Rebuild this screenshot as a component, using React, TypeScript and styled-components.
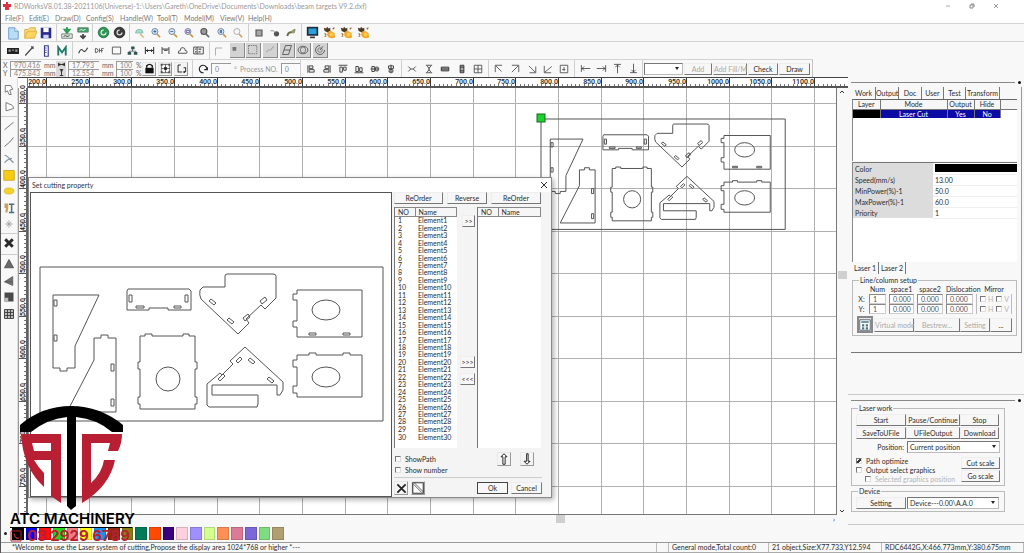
import React from "react";
import styled, { createGlobalStyle, css } from "styled-components";

const INK = "#2c2c2c";
const LINE = "#c9c9c9";

const Global = createGlobalStyle`
  * { box-sizing: border-box; }
  html, body { margin: 0; padding: 0; background: #f8f8f8; }
  body, button, input, select, table { font-family: Lato, "Liberation Sans", sans-serif; font-size: 7px; line-height: 8px; color: ${INK}; }
  button, input, select { margin: 0; padding: 0; border-radius: 0; }
`;

const Page = styled.div`
  position: relative;
  display: flex;
  flex-direction: column;
  min-height: 100vh;
  border-left: 1px solid #555;
  overflow: hidden;
`;

/* ---------- title and menu ---------- */
const TitleBar = styled.header`
  display: flex;
  align-items: center;
  height: 12px;
  padding: 0 24px 0 2px;
  background: #fff;
  color: #999;
`;
const TitleText = styled.h1`
  flex: 1;
  margin: 0 0 0 3px;
  font-size: 7px;
  font-weight: 400;
  white-space: nowrap;
`;
const WindowButtons = styled.div`
  display: flex;
  gap: 16px;
`;
const PlainButton = styled.button`
  display: grid;
  place-items: center;
  width: 8px;
  height: 10px;
  border: 0;
  background: none;
`;
const MenuBar = styled.nav`
  display: grid;
  grid-template-columns: 24px 26px 31px 34px 37px 27px 36px 28px 30px;
  align-items: center;
  height: 11px;
  padding-left: 4px;
  background: #fff;
`;
const MenuLink = styled.a`
  color: #777;
  text-decoration: none;
  white-space: nowrap;
`;

/* ---------- tool bars ---------- */
const Toolbar = styled.div`
  display: flex;
  align-items: center;
  height: 18px;
  padding-left: 2px;
  border-top: 1px solid #d4d4d4;
  background: #f8f8f8;
`;
const ToolGroup = styled.div<{ $w: number; $first?: boolean }>`
  display: flex;
  flex: none;
  align-items: center;
  justify-content: space-between;
  width: ${(p) => p.$w}px;
  height: 17px;
  padding: 0 2px;
  border-left: ${(p) => (p.$first ? "0" : "1px solid #cfcfcf")};
`;
const ToolButton = styled.button<{ $pressed?: boolean }>`
  display: grid;
  flex: none;
  place-items: center;
  width: 16px;
  height: 16px;
  border: 0;
  background: none;
  ${(p) =>
    p.$pressed &&
    css`
      width: 15px;
      height: 15px;
      background: #d3d3d3;
      border-right: 1px solid #888;
      border-bottom: 1px solid #888;
    `}
`;

type Draw = { [name: string]: React.ReactNode };
const lens = (
  <>
    <path d="M9.500 9.500l4 4" stroke="#c9973f" strokeWidth="2" />
    <circle cx="6.500" cy="6" r="4" fill="#dbe8f4" stroke="#6d87a6" strokeWidth="1.300" />
  </>
);
const bee = (
  <>
    <path d="M1 2l3 1 1-2 2 2 2-1 0 4-3 2-4-2z" fill="#4d3a22" />
    <path d="M6 7l3-1 3 1 2 2 1 5-4 1-4-1-2-3z" fill="#f0a52c" />
    <circle cx="10.500" cy="10.500" r="2.500" fill="#ffc94c" />
    <path d="M2 9l2 2M14 2l-2 2M2 13l2-1" stroke="#a1621c" strokeWidth="1.500" />
  </>
);
const icons: Draw = {
  newFile: (
    <>
      <path d="M3 2h7l4 4v9H3z" fill="#b9dcf7" stroke="#6c9cc9" />
      <path d="M10 2v4h4" fill="#eef7ff" stroke="#6c9cc9" />
    </>
  ),
  open: (
    <>
      <path d="M2 14V4h4l2-2h6v4" fill="#f9dc83" stroke="#d9a93a" />
      <path d="M2 14l3-8h11l-3 8z" fill="#ffd45e" stroke="#dfae3e" />
    </>
  ),
  save: (
    <>
      <path d="M2 2h12v12H2z" fill="#2b2b8c" />
      <path d="M5 2h6v5H5z" fill="#fff" />
      <path d="M5 10h6v4H5z" fill="#cfd2f2" />
    </>
  ),
  importIt: (
    <>
      <path d="M8 1v5M5 4l3 4 3-4z" fill="#2f9c57" stroke="#2f9c57" strokeWidth="2" />
      <path d="M2 9h12v5H2z" fill="#e3ece6" stroke="#6a7a70" />
      <path d="M4 12l2-1 2 1 3-1" stroke="#333" fill="none" />
    </>
  ),
  exportIt: (
    <>
      <path d="M2 2h12v5H2z" fill="#3aa166" stroke="#678070" />
      <path d="M4 5l2-1 2 1 3-1" stroke="#fff" fill="none" />
      <path d="M8 9v5M5 11l3 3 3-3" stroke="#444" fill="none" strokeWidth="2" />
    </>
  ),
  undo: (
    <>
      <circle cx="8" cy="8" r="6.500" fill="#2f9554" stroke="#1d6a3a" />
      <circle cx="8" cy="8" r="3" fill="none" stroke="#d8f2e0" strokeWidth="1.500" strokeDasharray="14 5" />
    </>
  ),
  redo: (
    <>
      <circle cx="8" cy="8" r="6.500" fill="#3c3c3c" stroke="#1d1d1d" />
      <circle cx="8" cy="8" r="3" fill="none" stroke="#ddd" strokeWidth="1.500" strokeDasharray="14 5" />
    </>
  ),
  pan: (
    <>
      <path d="M2 8q0-5 5-5t5 5z" fill="#a5dccf" stroke="#7ab9a8" />
      <path d="M8 9l5 5" stroke="#d7b583" strokeWidth="2" />
    </>
  ),
  zoomIn: <>{lens}<path d="M4.500 6h4M6.500 4v4" stroke="#2f4c8c" /></>,
  zoomOut: <>{lens}<path d="M4.500 6h4" stroke="#2f4c8c" /></>,
  zoomAll: <>{lens}<path d="M4.500 4.500h4v3h-4z" stroke="#7b3a8c" fill="none" /></>,
  zoomPage: (
    <>
      <path d="M9.500 9.500l4 4" stroke="#666" strokeWidth="2" />
      <circle cx="6.500" cy="6" r="4" fill="#999" stroke="#555" strokeWidth="1.500" />
    </>
  ),
  zoomSel: <>{lens}<path d="M5 4h3v4H5z" fill="#4e78c0" /></>,
  zoomWin: (
    <>
      <path d="M9.500 9.500l4 4" stroke="#c9a35f" strokeWidth="2" />
      <circle cx="6.500" cy="6" r="4" fill="#f6f6f6" stroke="#999" />
    </>
  ),
  square: <path d="M4 4h8v8H4z" fill="#a6a6a6" stroke="#555" strokeWidth="1.500" />,
  node: (
    <>
      <circle cx="10" cy="9" r="3.500" fill="#555" />
      <path d="M2 5h4l3 3" stroke="#777" fill="none" />
    </>
  ),
  link: (
    <>
      <path d="M3 12q1-5 5-5t5-4" stroke="#6b6b46" fill="none" strokeWidth="2.500" />
      <circle cx="11" cy="6" r="2.500" fill="#9a9a70" />
    </>
  ),
  monitor: (
    <>
      <path d="M1 1h14v11H1z" fill="#1c2b38" />
      <path d="M3 3h10v7H3z" fill="#2a9fd8" />
      <path d="M5 14h6" stroke="#333" strokeWidth="2" />
    </>
  ),
  bee,
  machine: (
    <>
      <path d="M0 4h16v8H0z" fill="#222" />
      <path d="M2 6h3v3H2zM7 6h2v2H7zM11 6h3v3h-3z" fill="#999" />
    </>
  ),
  pen: <path d="M3 14L12 4l2-2M11 2l3 3" stroke="#444" strokeWidth="1.500" fill="none" />,
  ruler: (
    <>
      <path d="M6 1h5v14H6z" fill="#fff" stroke="#3b3b8f" strokeWidth="1.500" />
      <path d="M6 4h3M6 7h3M6 10h3" stroke="#3b3b8f" />
    </>
  ),
  mark: <path d="M3 14V3l5 7 5-7v11" stroke="#1f7a6a" strokeWidth="2.500" fill="none" />,
  curve: <path d="M1 12Q4 4 7 8t7-4" stroke="#333" strokeWidth="1.500" fill="none" />,
  off: <path d="M2 5v6q4 0 4-3T2 5zM8 5v6M8 8h2M11 11V5h3M11 8h2" stroke="#555" strokeWidth="1.300" fill="none" />,
  rect: <path d="M2 3h12v10H2z" stroke="#444" fill="none" strokeWidth="1.200" />,
  tree: (
    <>
      <path d="M8 5v4M3 12V9h10v3" stroke="#345" fill="none" />
      <path d="M6 2h5v4H6zM1 10h5v4H1zM10 10h5v4h-5z" fill="#2f5550" />
    </>
  ),
  spanH: <path d="M2 3v10M14 3v10M2 8h12M5 6v4M11 6v4" stroke="#333" strokeWidth="1.500" fill="none" />,
  spanV: <path d="M3 3v10M13 3v10M3 6h10M6 8h5" stroke="#555" strokeWidth="1.500" fill="none" />,
  cloud: <path d="M2 12q-1-4 3-4 0-5 4-4 3 0 3 4 4 0 2 4z" stroke="#444" fill="none" strokeWidth="1.300" />,
  form: (
    <>
      <path d="M1 3h14v10H1zM6 3v10" stroke="#333" fill="none" strokeWidth="1.200" />
      <path d="M3 6h2M3 10h2M8 6h4M8 10h3" stroke="#444" strokeWidth="1.500" />
    </>
  ),
  corner: <path d="M2 14V4h9" stroke="#999" fill="none" />,
  snap: <path d="M2 4h5v5H2z" fill="#777" />,
  dashed: <path d="M2 2h11v11H2z" stroke="#666" strokeDasharray="2 1" fill="none" />,
  slashes: <path d="M3 11l4-4M8 9l5-6" stroke="#888" fill="none" />,
  para: <path d="M6 2h8l-4 12H2zM4 8l8 0" stroke="#444" fill="none" />,
  rings: (
    <>
      <ellipse cx="8" cy="8" rx="6.500" ry="5" stroke="#444" fill="none" />
      <ellipse cx="8" cy="8" rx="3.500" ry="4" stroke="#666" fill="none" />
    </>
  ),
  target: (
    <>
      <path d="M8 2a6 6 0 1 0 6 6M12 3l-4 5" stroke="#555" fill="none" strokeWidth="1.200" />
      <circle cx="8" cy="8" r="3" stroke="#666" fill="none" />
    </>
  ),
  lock: (
    <>
      <path d="M4 7V4q4-4 8 0v3" stroke="#111" fill="none" strokeWidth="2" />
      <path d="M2 7h12v8H2z" fill="#111" />
    </>
  ),
  anchorGrid: (
    <>
      <path d="M2 2h12v12H2zM2 8h12M8 2v12" stroke="#333" fill="none" />
      <path d="M6 6h4v4H6z" fill="#222" />
      <path d="M1 1h3v3H1zM12 1h3v3h-3zM1 12h3v3H1zM12 12h3v3h-3z" fill="#555" />
    </>
  ),
  moveTo: (
    <>
      <path d="M3 3v10h6M3 3h4M11 7h3v6" stroke="#333" fill="none" strokeWidth="1.500" />
      <circle cx="12" cy="13" r="1.500" fill="#222" />
    </>
  ),
  rotate: <path d="M9 14a6 6 0 1 1 5-5M10 9h5v-4" stroke="#222" fill="none" strokeWidth="1.800" />,
  widthIco: <path d="M1 4v8M15 4v8M1 8h14M4 5v6M12 5v6" stroke="#222" fill="none" strokeWidth="2" />,
  heightIco: <path d="M4 1h8M4 15h8M8 1v14M5 4h6" stroke="#222" fill="none" strokeWidth="2" />,
  alignL: <path d="M3 2v12M5 3h6v4H5zM5 9h8v4H5z" stroke="#333" fill="none" strokeWidth="1.400" />,
  alignR: <path d="M13 2v12M5 3h6v4H5zM3 9h8v4H3z" stroke="#333" fill="none" strokeWidth="1.400" />,
  alignT: <path d="M1 2h14M3 5h4v8H3zM9 5h4v5H9z" stroke="#333" fill="none" strokeWidth="1.400" />,
  alignB: <path d="M1 14h14M3 4h4v8H3zM9 6h4v6H9z" stroke="#333" fill="none" strokeWidth="1.400" />,
  alignCH: <path d="M1 8h14M3 4h4v8H3zM9 5h4v6H9z" stroke="#333" fill="none" strokeWidth="1.400" />,
  alignCV: <path d="M8 1v14M4 3h8v4H4zM5 9h6v4H5z" stroke="#333" fill="none" strokeWidth="1.400" />,
  distH: <path d="M2 4l4 4-4 4M14 4l-4 4 4 4M6 8h4" stroke="#333" fill="none" strokeWidth="1.300" />,
  distV: <path d="M3 2h10M3 14h10M5 3l3 4 3-4M5 13l3-4 3 4M8 6v4" stroke="#333" fill="none" strokeWidth="1.300" />,
  sameW: <path d="M2 5h12v6H2zM2 8h12" stroke="#333" fill="#aaa" strokeWidth="1.500" />,
  sameH: <path d="M5 2h6v12H5zM5 5h6M5 11h6" stroke="#333" fill="#aaa" strokeWidth="1.500" />,
  sameB: <path d="M2 2h12v12H2zM8 2v12M2 8h12" stroke="#444" fill="none" strokeWidth="1.300" />,
  toTL: <path d="M2 13V2h11M3 3l9 9" stroke="#444" fill="none" strokeWidth="1.300" />,
  toTR: <path d="M3 2h11v11M13 3L3 13" stroke="#444" fill="none" strokeWidth="1.300" />,
  toBR: <path d="M14 4v10H4M3 3l10 10" stroke="#444" fill="none" strokeWidth="1.300" />,
  toBL: <path d="M2 3v11h11M3 13L14 4" stroke="#444" fill="none" strokeWidth="1.300" />,
  toC: <path d="M2 2h12v12H2zM5 9h5M8 5v6" stroke="#444" fill="none" strokeWidth="1.300" />,
  toL: <path d="M2 3v10M2 8h13M6 5L3 8l3 3" stroke="#444" fill="none" strokeWidth="1.200" />,
  toR: <path d="M14 3v10M1 8h13M10 5l3 3-3 3" stroke="#444" fill="none" strokeWidth="1.200" />,
  toT: <path d="M3 2h10M8 2v13M5 6l3-3 3 3" stroke="#444" fill="none" strokeWidth="1.200" />,
  toB: <path d="M3 14h10M8 1v13M5 10l3 3 3-3" stroke="#444" fill="none" strokeWidth="1.200" />,
  pick: <path d="M3 2h7l3 5-4 1 2 6-3 0-2-5-3 2z" stroke="#555" fill="#fff" />,
  nodeEdit: <path d="M4 2v11l4-1 6-2q0-5-6-6z" stroke="#555" fill="#fff" />,
  line: <path d="M2 13L14 3" stroke="#666" strokeWidth="1.200" />,
  polyline: <path d="M2 14L9 8l5-6" stroke="#666" strokeWidth="1.200" fill="none" />,
  bezier: <path d="M2 3q3 0 7 5l5 5M2 13q4-5 10-6" stroke="#8795a0" strokeWidth="1.500" fill="none" />,
  yellowBox: <path d="M1 2h14v13H1z" fill="#f8cc12" stroke="#c49e10" />,
  yellowOval: <ellipse cx="8" cy="8" rx="6.500" ry="4" fill="#f6d32c" stroke="#d8b420" />,
  textTool: (
    <>
      <path d="M2 2h5v6l-1 6H3l1-6H2z" fill="#c8a25c" />
      <path d="M8 3h7M8 14h7M11.500 3v11" stroke="#4c6d82" strokeWidth="2" />
    </>
  ),
  spark: <path d="M8 3v10M3 8h10M5 5l6 6M11 5l-6 6" stroke="#999" />,
  cross: <path d="M3 3l10 10M13 3L3 13" stroke="#2a2a2a" strokeWidth="4" />,
  mirrorH: <path d="M8 2l6 11H2z" fill="#6a6a6a" stroke="#444" />,
  mirrorV: <path d="M2 9L13 2v12zM2 9h11" fill="#707070" stroke="#555" />,
  dock: (
    <>
      <path d="M2 2h12v12H2z" fill="#4a4a4a" />
      <path d="M2 9h5v5H2z" fill="#bbb" />
    </>
  ),
  array: <path d="M2 2h12v12H2zM6 2v12M10 2v12M2 6h12M2 10h12" stroke="#3c3c3c" fill="#bbb" strokeWidth="1.200" />,
  arrowUp: <path d="M8 1l4 4h-2.500v10h-3V5H4z" fill="#fff" stroke="#222" strokeWidth="1.300" />,
  arrowDown: <path d="M8 15l4-4H9.500V1h-2v10H4z" fill="#fff" stroke="#222" strokeWidth="1.300" />,
  bigX: <path d="M2 2l12 12M14 2L2 14" stroke="#222" strokeWidth="2.500" />,
  boxSlash: (
    <>
      <path d="M1 1h14v14H1z" stroke="#333" fill="#fff" strokeWidth="1.500" />
      <path d="M2 3l11 11M3 1l12 12" stroke="#333" />
    </>
  ),
  gridBlue: (
    <>
      <path d="M1 1h14v14H1z" fill="#fff" stroke="#345" />
      <path d="M3 3h10v2H3zM4 7h3v3H4zM9 7h3v3H9zM4 11h3v3H4zM9 11h3v3H9z" fill="#4a7584" />
    </>
  ),
};

const IconSvg = styled.svg`
  flex: none;
`;
const Icon = ({ name, size = 14 }: { name: string; size?: number }) => (
  <IconSvg width={size} height={size} viewBox="0 0 16 16" aria-hidden="true">
    {icons[name]}
  </IconSvg>
);

const Tools = ({ w, names, first, size, pressedFrom = 99 }: { w: number; names: string[]; first?: boolean; size?: number; pressedFrom?: number }) => (
  <ToolGroup $w={w} $first={first}>
    {names.map((n, i) => (
      <ToolButton key={n + i} aria-label={n} $pressed={i >= pressedFrom}>
        <Icon name={n} size={size} />
      </ToolButton>
    ))}
  </ToolGroup>
);

/* ---------- measure bar ---------- */
const MeasureBar = styled(Toolbar)`
  align-self: flex-start;
  border-right: 1px solid #c4c4c4;
`;
const FieldGrid = styled.div<{ $cols: string; $gap?: number }>`
  display: grid;
  grid-template-columns: ${(p) => p.$cols};
  align-items: center;
  column-gap: 3px;
  row-gap: 0;
  margin-right: ${(p) => p.$gap ?? 5}px;
  color: #666;
  line-height: 8px;
`;
const SmallInput = styled.input`
  display: block;
  width: 100%;
  height: 8px;
  padding-left: 3px;
  border: 0;
  border-top: 1px solid #999;
  border-left: 1px solid #999;
  background: #fafafa;
  color: #888;
`;
const ScaleMark = styled.div`
  display: grid;
  place-items: center;
  width: 10px;
  height: 16px;
  margin-right: 2px;
  background: #dadada;
`;
const BoxButtons = styled.div`
  display: flex;
  gap: 2px;
  padding-right: 4px;
`;
const BoxButton = styled.button`
  display: grid;
  place-items: center;
  width: 14px;
  height: 14px;
  border: 1px solid #e8e8e8;
  border-right-color: #999;
  border-bottom-color: #999;
  background: #f4f4f4;
`;
const RotateRow = styled.div`
  display: flex;
  flex: none;
  align-items: center;
  gap: 3px;
  width: 108px;
  height: 17px;
  padding-left: 5px;
  border-left: 1px solid #cfcfcf;
  color: #999;
  white-space: nowrap;
`;
const ShortInput = styled(SmallInput)`
  flex: none;
  width: 20px;
  height: 11px;
`;
const Raised = styled.button<{ $w?: number; $h?: number; $dim?: boolean; $heavy?: boolean }>`
  width: ${(p) => (p.$w ? p.$w + "px" : "100%")};
  height: ${(p) => p.$h ?? 12}px;
  border: 1px solid #eee;
  border-right-color: #777;
  border-bottom-color: #777;
  background: #f7f7f7;
  color: ${(p) => (p.$dim ? "#aaa" : INK)};
  line-height: 8px;
  white-space: nowrap;
  ${(p) => p.$heavy && css`border: 1px solid #444;`}
`;
const SelectBox = styled.span<{ $w?: number; $h: number }>`
  position: relative;
  display: block;
  width: ${(p) => (p.$w ? p.$w + "px" : "100%")};
  height: ${(p) => p.$h}px;
  select {
    display: block;
    width: 100%;
    height: 100%;
    padding-left: 2px;
    appearance: none;
    border: 1px solid #777;
    border-right-color: #bbb;
    border-bottom-color: #bbb;
    background: #fff;
  }
  &::after {
    content: "";
    position: absolute;
    right: 4px;
    top: 4px;
    border: 2px solid transparent;
    border-top: 3px solid #222;
    pointer-events: none;
  }
`;
const MeasureActions = styled.div`
  display: flex;
  gap: 1px;
  height: 17px;
  align-items: center;
  padding: 0 2px 0 1px;
  border-left: 1px solid #cfcfcf;
`;

/* ---------- work area ---------- */
const Main = styled.main`
  display: flex;
  flex: 1;
`;
const LeftTools = styled.div`
  display: flex;
  flex: none;
  flex-direction: column;
  align-items: center;
  width: 17px;
  padding-top: 4px;
  border-right: 1px solid #ddd;
`;
const LeftGroup = styled.div<{ $h: number }>`
  display: flex;
  flex-direction: column;
  align-items: center;
  justify-content: space-between;
  height: ${(p) => p.$h}px;
  padding: 1px 0;
  border-bottom: 1px solid #ccc;
  &:last-child { border-bottom: 0; }
`;
const Workspace = styled.section`
  display: grid;
  flex: 1;
  min-width: 0;
  grid-template-columns: 10px minmax(0, 1fr) 11px;
  grid-template-rows: 11px minmax(0, 1fr) 10px;
`;
const Corner = styled.div`
  border-top: 1px solid #444;
  border-right: 1px solid #777;
  background: #fff;
`;
const TopRuler = styled.div`
  grid-column: 2 / 4;
  height: 11px;
  border-top: 1px solid #444;
  border-bottom: 2px solid #555;
  background: #fff;
  overflow: hidden;
  svg { display: block; }
`;
const SideRuler = styled.div`
  border-right: 2px solid #666;
  border-left: 1px solid #999;
  background: #fff;
  svg { display: block; overflow: visible; }
`;
const Canvas = styled.div`
  position: relative;
  border-right: 1px solid #777;
  border-bottom: 1px solid #777;
  background: #fff;
  > svg { display: block; position: absolute; left: 0; top: 0; }
`;
const RulerText = styled.text`
  font: 500 7px Roboto, "Liberation Sans", sans-serif;
  fill: #222;
`;
const VScroll = styled.div`
  display: flex;
  flex-direction: column;
  align-items: center;
  justify-content: space-between;
  padding: 2px 0;
`;
const VTrack = styled.div`
  display: grid;
  grid-template-rows: 179fr 8px 233fr;
  flex: 1;
  i { grid-row: 2; width: 9px; background: #cfcfcf; }
`;
const HScroll = styled.div`
  grid-column: 2;
  display: grid;
  grid-template-columns: 528fr 9px 270fr;
  padding-right: 2px;
  i { height: 8px; background: #cfcfcf; }
  span { justify-self: end; }
`;

/* ---------- dialog ---------- */
const Dialog = styled.div`
  position: absolute;
  left: 0;
  top: 89px;
  display: grid;
  grid-template-rows: 14px 1fr;
  width: 524px;
  height: 321px;
  border: 1px solid #888;
  background: #f4f4f4;
  box-shadow: 2px 2px 5px rgba(0, 0, 0, 0.3);
`;
const DialogTitle = styled.div`
  display: flex;
  align-items: center;
  justify-content: space-between;
  padding: 0 3px;
  background: #fff;
  color: #333;
`;
const DialogBody = styled.div`
  display: grid;
  grid-template-columns: 363px 1fr;
  min-height: 0;
`;
const Preview = styled.div`
  margin: 0 0 1px 1px;
  border: 1px solid #555;
  background: #fff;
  svg { display: block; }
`;
const DialogSide = styled.div`
  display: flex;
  flex-direction: column;
  padding: 0 9px 0 2px;
`;
const OrderRow = styled.div`
  display: grid;
  grid-template-columns: 49px 40px 50px;
  gap: 4px;
  margin-bottom: 3px;
`;
const Lists = styled.div`
  display: grid;
  grid-template-columns: 63px 20px 64px;
  height: 241px;
`;
const ListPane = styled.div`
  border-left: 1px solid #777;
  background: #fff;
`;
const ListTable = styled.table<{ $h?: number }>`
  width: 100%;
  height: ${(p) => (p.$h ? p.$h + "px" : "auto")};
  border-collapse: collapse;
  table-layout: fixed;
  th, td { padding: 0 0 0 3px; text-align: left; font-weight: 400; line-height: 7px; }
  th { height: 9px; border: 1px solid #888; border-width: 1px 1px 1px 0; background: #f6f6f6; }
  th:first-child { width: 20px; }
`;
const MoveCol = styled.div`
  display: flex;
  flex-direction: column;
  align-items: flex-end;
  padding: 8px 2px 63px 0;
  gap: 5px;
  button:first-child { margin-bottom: auto; }
`;
const Options = styled.div`
  display: flex;
  justify-content: space-between;
  height: 30px;
  padding: 4px 8px 0 1px;
  border-bottom: 1px solid #ccc;
`;
const Stack = styled.div<{ $gap?: number; $pt?: number }>`
  display: flex;
  flex-direction: column;
  gap: ${(p) => p.$gap ?? 2}px;
  padding-top: ${(p) => p.$pt ?? 0}px;
`;
const CheckLabel = styled.label<{ $dim?: boolean; $indent?: number; $tight?: boolean }>`
  display: flex;
  align-items: center;
  gap: ${(p) => (p.$tight ? 2 : 4)}px;
  padding-left: ${(p) => p.$indent ?? 0}px;
  white-space: nowrap;
  color: ${(p) => (p.$dim ? "#b5b5b5" : INK)};
  input {
    flex: none;
    width: 6px;
    height: 6px;
    appearance: none;
    border: 1px solid #777;
    border-right-color: #ddd;
    border-bottom-color: #ddd;
    background: #fff;
  }
  input:checked { background: linear-gradient(135deg, #fff 30%, #333 30%, #333 75%, #fff 75%); }
`;
const ArrowRow = styled.div`
  display: flex;
  gap: 9px;
`;
const Footer = styled.div`
  display: flex;
  align-items: center;
  gap: 3px;
  padding-top: 3px;
  span { flex: 1; }
`;

/* ---------- right panels ---------- */
const Side = styled.aside`
  display: flex;
  flex: none;
  flex-direction: column;
  width: 176px;
`;
const Handle = styled.div`
  display: flex;
  align-items: center;
  gap: 3px;
  height: 10px;
  padding: 0 3px;
  &::before { content: ""; flex: 1; border-top: 1px solid #888; }
  &::after { content: ""; width: 3px; height: 3px; border-radius: 2px; background: #111; }
`;
const WorkPanel = styled.div`
  margin: 0 2px 0 3px;
  padding: 0 4px 16px 1px;
  border-right: 1px solid #999;
  border-bottom: 1px solid #777;
`;
const TabRow = styled.div<{ $cols: string }>`
  display: grid;
  grid-template-columns: ${(p) => p.$cols};
  height: 12px;
`;
const Tab = styled.button`
  border: 0;
  border-right: 1px solid #777;
  background: none;
  white-space: nowrap;
`;
const LayerBox = styled.div`
  height: 62px;
  border-top: 1px solid #666;
  border-left: 1px solid #888;
  background: #fff;
`;
const LayerTable = styled.table`
  width: 100%;
  border-collapse: collapse;
  table-layout: fixed;
  th, td { height: 9px; padding: 0; font-weight: 400; line-height: 8px; text-align: center; border-right: 1px solid #777; }
  th { background: #f6f6f6; border-bottom: 1px solid #777; }
  th:last-child, td:last-child { border-right: 0; }
  td { color: #fff; background: #0c0ca4; }
  td:first-child { background: #000; }
  td:last-child { background: #fff; }
  th:nth-child(1), th:nth-child(3) { width: 27px; }
  th:nth-child(2) { width: 67px; }
  th:nth-child(4) { width: 26px; }
`;
const PropBox = styled.div`
  height: 100px;
  margin-top: 1px;
  border-top: 1px solid #777;
  border-left: 1px solid #888;
  background: #fff;
`;
const PropTable = styled.table`
  width: 100%;
  border-collapse: collapse;
  table-layout: fixed;
  th, td { height: 11px; padding: 0 0 0 2px; text-align: left; font-weight: 400; line-height: 8px; }
  th { width: 80px; background: #dcdcdc; }
  td { border-bottom: 1px solid #eee; }
`;
const ColorBar = styled.div`
  height: 8px;
  background: #000;
`;
const Frame = styled.fieldset<{ $mt?: number; $pt?: number }>`
  min-width: 0;
  margin: ${(p) => p.$mt ?? 0}px 0 0;
  padding: ${(p) => p.$pt ?? 0}px 4px 2px;
  border: 1px solid #bbb;
  legend { height: 7px; margin-left: 2px; padding: 0 1px; line-height: 7px; }
`;
const ArrayRow = styled.div`
  display: grid;
  grid-template-columns: 9px 17px 25px 26px 27px 1fr;
  gap: 3px;
  align-items: center;
  height: 10px;
  white-space: nowrap;
  text-align: center;
`;
const NumberInput = styled(SmallInput)`
  height: 10px;
  border: 1px solid #888;
  border-right-color: #ccc;
  border-bottom-color: #ccc;
  background: #fff;
  color: #555;
`;
const MirrorPair = styled.div`
  display: flex;
  gap: 3px;
  height: 10px;
  padding-left: 3px;
  border-left: 1px solid #bbb;
  border-right: 1px solid #bbb;
`;
const ArrayButtons = styled.div`
  display: grid;
  grid-template-columns: 17px 40px 46px 30px 1fr;
  align-items: center;
  margin-top: 2px;
`;
const GridToggle = styled.button`
  display: grid;
  place-items: center;
  width: 16px;
  height: 17px;
  border: 2px solid #888;
  background: #e6e6e6;
`;
const LaserPanel = styled.div`
  margin-top: auto;
  padding-bottom: 12px;
  border-top: 1px solid ${LINE};
  border-bottom: 1px solid ${LINE};
`;
const LaserInner = styled.div`
  padding: 0 19px 0 3px;
`;
const ButtonGrid = styled.div`
  display: grid;
  grid-template-columns: 50px 54px 39px;
  gap: 1px 0;
`;
const LabelRow = styled.div`
  display: grid;
  grid-template-columns: 48px 93px;
  column-gap: 3px;
  align-items: center;
  margin-top: 2px;
  label { text-align: right; }
`;
const OptionSplit = styled.div`
  display: grid;
  grid-template-columns: 1fr 39px;
  margin-top: 4px;
`;
const DeviceRow = styled.div`
  display: grid;
  grid-template-columns: 50px 92px;
  column-gap: 1px;
`;

/* ---------- bottom ---------- */
const PaletteBar = styled.div`
  display: flex;
  align-items: center;
  gap: 5px;
  height: 17px;
  padding-left: 3px;
  &::before { content: ""; width: 3px; height: 3px; background: #222; border-radius: 2px; }
`;
const Swatches = styled.div`
  display: grid;
  grid-template-columns: repeat(20, 1fr);
  gap: 2px;
  width: 272px;
`;
const Swatch = styled.button<{ $c: string }>`
  height: 13px;
  border: 1px solid rgba(0, 0, 0, 0.15);
  background: ${(p) => p.$c};
`;
const StatusBar = styled.footer`
  display: grid;
  grid-template-columns: 656px 12px 100px 113px 1fr;
  height: 11px;
  border-top: 1px solid #999;
  border-bottom: 1px solid #aaa;
  line-height: 9px;
  white-space: nowrap;
  span { padding-left: 3px; border-right: 1px solid #bbb; overflow: hidden; }
  span:first-child { padding-left: 11px; }
`;

/* ---------- brand overlay ---------- */
const Brand = styled.div`
  position: absolute;
  left: 9px;
  bottom: 9px;
  width: 122px;
  pointer-events: none;
  > svg { display: block; margin-left: 10px; }
`;
const BrandName = styled.div`
  border-bottom: 1px solid #000;
  color: #000;
  font: 600 15px/17px Inter, Roboto, sans-serif;
  white-space: nowrap;
`;
const BrandPhone = styled.div`
  display: flex;
  align-items: center;
  gap: 5px;
  color: #b81f33;
  font: 700 15px/16px Inter, Roboto, sans-serif;
  white-space: nowrap;
`;

/* Gantry parts, drawn in the coordinates of the 343 x 154 sheet. */
const Parts = () => (
  <g fill="none" stroke="#555" strokeWidth="1">
    {[
      "M0 0H343V154H0Z",
      "M13 28H59L35 79V101H27V104H20V101H13Z",
      "M14 33h3v6h-3zM14 68h3v6h-3z",
      "M54 71H61V68H68V71H76V145H27L54 93Z",
      "M71 97h3v7h-3zM71 132h3v7h-3z",
      "M88 22H149L151 24V43H128V41H109V43H87V24Z",
      "M89 28h3v7h-3zM145 28h3v7h-3zM96 39h8v2h-8zM134 39h7v2h-7z",
      "M187 7H233Q236 7 236 9V31L225 42L221 38L206 52L209 56L198 67L161 32Q159 28 160 23L163 20H185V9Q185 7 187 7Z",
      "M171 32l5 4-2 2-5-4zM189 51l5 4-2 2-5-4zM203 51l5-4 2 3-5 4zM220 34l5-4 2 3-5 4z",
      "M257 23H322V70H257V60H253V54H257V33H253V27H257Z",
      "M269 66h7v2h-7zM303 66h7v2h-7z",
      "M257 88H269V86H276V88H303V86H310V88H322V130H257V126H253V119H257V100H253V93H257Z",
      "M100 69H105V67H112V69H143V67H149V69H155V95H157V102H155V130H157V137H155V142H100V137H98V130H100V102H98V95H100Z",
      "M205 80L243 115V123L240 128H237V118H172V128H218V137L217 140H169L167 138V117L180 106L182 108L193 97L190 94Z",
      "M196 94l4-4 2 2-4 4zM210 91l5 4-2 2-5-4zM229 110l5 4-2 2-5-4zM178 112l5-5 2 2-5 5z",
    ].map((d) => (
      <path key={d} d={d} vectorEffect="non-scaling-stroke" />
    ))}
    <circle cx="128" cy="112" r="12" vectorEffect="non-scaling-stroke" />
    <ellipse cx="286" cy="43" rx="14" ry="10" vectorEffect="non-scaling-stroke" />
    <ellipse cx="286" cy="110" rx="14" ry="10" vectorEffect="non-scaling-stroke" />
  </g>
);

const colAt = (i: number) => Math.round(18 + (i * 128) / 3);
const rowAt = (i: number) => Math.round(15 + (i * 85) / 2);
const span = (n: number) => Array.from({ length: n }, (_, i) => i);

const CanvasDrawing = () => (
  <svg width="100%" height="100%">
    <g stroke="#b0b0b0" shapeRendering="crispEdges">
      {span(48).map((i) => (
        <line key={"v" + i} x1={colAt(i)} x2={colAt(i)} y1="0" y2="100%" />
      ))}
      {span(30).map((i) => (
        <line key={"h" + i} y1={rowAt(i)} y2={rowAt(i)} x1="0" x2="100%" />
      ))}
    </g>
    <g transform="translate(513 31) scale(.712 .717)">
      <Parts />
    </g>
    <rect x="509" y="26" width="8" height="8" fill="#1fd12f" stroke="#176b1e" />
  </svg>
);

const palette = ["#000", "#0000f0", "#fb1010", "#20d820", "#f08080", "#ffff10", "#2090f0", "#8b2a10", "#808010", "#007a58", "#ff4a00", "#38007c", "#ffd0dc", "#a090ff", "#d4ff90", "#ff9055", "#dc7a98", "#7a68d8", "#80dc80", "#b0a070"];

const Num = ({ label, value }: { label: string; value: string }) => <NumberInput aria-label={label} defaultValue={value} />;

export default function App() {
  return (
    <>
      <Global />
      <Page>
        <TitleBar>
          <svg width="8" height="8" viewBox="0 0 8 8" aria-hidden="true">
            <path d="M3 0h2v2h3v3H6v3H2V5H0V2h3z" fill="#dd3340" />
          </svg>
          <TitleText>RDWorksV8.01.38-2021106(Universe)-1:\Users\Gareth\OneDrive\Documents\Downloads\beam targets V9.2.dxf)</TitleText>
          <WindowButtons>
            <PlainButton aria-label="Minimize"><svg width="6" height="6"><path d="M1 3h4" stroke="#aaa" /></svg></PlainButton>
            <PlainButton aria-label="Restore"><svg width="6" height="6"><path d="M1 2h3v3H1zM2 1h3v3" stroke="#888" fill="none" /></svg></PlainButton>
            <PlainButton aria-label="Close"><svg width="6" height="6"><path d="M1 1l4 4M5 1L1 5" stroke="#999" /></svg></PlainButton>
          </WindowButtons>
        </TitleBar>
        <MenuBar>
          {["File(F)", "Edit(E)", "Draw(D)", "Config(S)", "Handle(W)", "Tool(T)", "Model(M)", "View(V)", "Help(H)"].map((m) => (
            <MenuLink key={m} href="#">{m}</MenuLink>
          ))}
        </MenuBar>

        <Toolbar>
          <Tools first w={53} names={["newFile", "open", "save"]} />
          <Tools w={36} names={["importIt", "exportIt"]} />
          <Tools w={37} names={["undo", "redo"]} size={13} />
          <Tools w={119} names={["pan", "zoomIn", "zoomOut", "zoomAll", "zoomPage", "zoomSel", "zoomWin"]} size={12} />
          <Tools w={53} names={["square", "node", "link"]} size={12} />
          <Tools w={72} names={["monitor", "bee", "bee", "bee"]} size={13} />
        </Toolbar>
        <Toolbar>
          <Tools first w={69} names={["machine", "pen", "ruler", "mark"]} size={12} />
          <Tools w={137} names={["curve", "off", "rect", "tree", "spanH", "spanV", "cloud", "form"]} size={11} />
          <Tools w={121} names={["corner", "snap", "dashed", "slashes", "para", "rings", "target"]} size={12} pressedFrom={1} />
        </Toolbar>
        <MeasureBar>
          <FieldGrid $cols="4px 31px 9px" $gap={3}>
            <span>X</span><SmallInput aria-label="X" defaultValue="970.416" /><span>mm</span>
            <span>Y</span><SmallInput aria-label="Y" defaultValue="475.843" /><span>mm</span>
          </FieldGrid>
          <ScaleMark><Icon name="widthIco" size={7} /><Icon name="heightIco" size={7} /></ScaleMark>
          <FieldGrid $cols="31px 9px" $gap={5}>
            <SmallInput aria-label="Width" defaultValue="17.793" /><span>mm</span>
            <SmallInput aria-label="Height" defaultValue="12.554" /><span>mm</span>
          </FieldGrid>
          <FieldGrid $cols="17px 6px" $gap={0}>
            <SmallInput aria-label="Scale X" defaultValue="100" /><span>%</span>
            <SmallInput aria-label="Scale Y" defaultValue="100" /><span>%</span>
          </FieldGrid>
          <BoxButtons>
            {["lock", "anchorGrid", "moveTo"].map((n) => (
              <BoxButton key={n} aria-label={n}><Icon name={n} size={11} /></BoxButton>
            ))}
          </BoxButtons>
          <RotateRow>
            <Icon name="rotate" size={10} />
            <ShortInput aria-label="Angle" defaultValue="0" />
            <span>°</span>
            <span>Process NO.</span>
            <ShortInput aria-label="Process number" defaultValue="0" />
          </RotateRow>
          <Tools w={101} names={["alignL", "alignR", "alignT", "alignB", "alignCH", "alignCV"]} size={10} />
          <Tools w={87} names={["distH", "distV", "sameW", "sameH", "sameB"]} size={10} />
          <Tools w={86} names={["toTL", "toTR", "toBR", "toBL", "toC"]} size={10} />
          <Tools w={68} names={["toL", "toR", "toT", "toB"]} size={11} />
          <MeasureActions>
            <SelectBox $w={39} $h={12}><select aria-label="Layer filter" /></SelectBox>
            <Raised $w={28} $dim>Add</Raised>
            <Raised $w={34} $dim>Add Fill/M</Raised>
            <Raised $w={30}>Check</Raised>
            <Raised $w={31}>Draw</Raised>
          </MeasureActions>
        </MeasureBar>

        <Main>
          <LeftTools>
            {[
              { h: 36, n: ["pick", "nodeEdit"] },
              { h: 117, n: ["line", "polyline", "bezier", "yellowBox", "yellowOval", "textTool", "spark"] },
              { h: 21, n: ["cross"] },
              { h: 68, n: ["mirrorH", "mirrorV", "dock", "array"] },
            ].map((g) => (
              <LeftGroup key={g.n[0]} $h={g.h}>
                {g.n.map((n) => (
                  <ToolButton key={n} aria-label={n}><Icon name={n} size={12} /></ToolButton>
                ))}
              </LeftGroup>
            ))}
          </LeftTools>

          <Workspace>
            <Corner />
            <TopRuler>
              <svg width="100%" height="8">
                {span(300).map((i) => (
                  <rect key={i} x={Math.round(1 + (i * 64) / 15)} y="6" width="1" height="2" fill="#777" />
                ))}
                {span(19).map((i) => (
                  <g key={i}>
                    <rect x={colAt(i)} y="0" width="1" height="8" fill="#333" />
                    <RulerText x={colAt(i)} y="6" textAnchor="end">{200 + i * 50}.0</RulerText>
                  </g>
                ))}
              </svg>
            </TopRuler>
            <SideRuler>
              <svg width="7" height="100%">
                {span(100).map((i) => (
                  <rect key={i} x="5" y={Math.round(2 + (i * 17) / 4)} width="2" height="1" fill="#777" />
                ))}
                {span(10).map((i) => (
                  <g key={i}>
                    <rect x="0" y={rowAt(i)} width="7" height="1" fill="#555" />
                    <RulerText transform={`translate(6 ${rowAt(i)}) rotate(-90)`}>{300 + i * 50}.0</RulerText>
                  </g>
                ))}
              </svg>
            </SideRuler>
            <Canvas>
              <CanvasDrawing />
              <Dialog role="dialog" aria-label="Set cutting property">
                <DialogTitle>
                  <span>Set cutting property</span>
                  <PlainButton aria-label="Close dialog"><svg width="6" height="6"><path d="M0 0l6 6M6 0L0 6" stroke="#333" /></svg></PlainButton>
                </DialogTitle>
                <DialogBody>
                  <Preview>
                    <svg width="360" height="303">
                      <g transform="translate(9 74)"><Parts /></g>
                    </svg>
                  </Preview>
                  <DialogSide>
                    <OrderRow>
                      <Raised>ReOrder</Raised>
                      <Raised>Reverse</Raised>
                      <Raised>ReOrder</Raised>
                    </OrderRow>
                    <Lists>
                      <ListPane>
                        <ListTable $h={234}>
                          <thead><tr><th>NO</th><th>Name</th></tr></thead>
                          <tbody>
                            {span(30).map((i) => (
                              <tr key={i}><td>{i + 1}</td><td>Element{i + 1}</td></tr>
                            ))}
                          </tbody>
                        </ListTable>
                      </ListPane>
                      <MoveCol>
                        <Raised $w={13}>&gt;&gt;</Raised>
                        <Raised $w={15}>&gt;&gt;&gt;</Raised>
                        <Raised $w={15}>&lt;&lt;&lt;</Raised>
                      </MoveCol>
                      <ListPane>
                        <ListTable>
                          <thead><tr><th>NO</th><th>Name</th></tr></thead>
                        </ListTable>
                      </ListPane>
                    </Lists>
                    <Options>
                      <Stack $gap={3} $pt={3}>
                        <CheckLabel><input type="checkbox" />ShowPath</CheckLabel>
                        <CheckLabel><input type="checkbox" />Show number</CheckLabel>
                      </Stack>
                      <ArrowRow>
                        <BoxButton aria-label="Move up"><Icon name="arrowUp" size={12} /></BoxButton>
                        <BoxButton aria-label="Move down"><Icon name="arrowDown" size={12} /></BoxButton>
                      </ArrowRow>
                    </Options>
                    <Footer>
                      <BoxButton aria-label="Delete"><Icon name="bigX" size={11} /></BoxButton>
                      <BoxButton aria-label="Swap"><Icon name="boxSlash" size={12} /></BoxButton>
                      <span />
                      <Raised $w={31} $heavy>Ok</Raised>
                      <Raised $w={31}>Cancel</Raised>
                    </Footer>
                  </DialogSide>
                </DialogBody>
              </Dialog>
            </Canvas>
            <VScroll>
              <svg width="5" height="4"><path d="M0 3l2-2 2 2" stroke="#333" fill="none" /></svg>
              <VTrack><i /></VTrack>
              <svg width="5" height="4"><path d="M0 1l2 2 2-2" stroke="#333" fill="none" /></svg>
            </VScroll>
            <HScroll><b /><i /><span>&rsaquo;</span></HScroll>
          </Workspace>

          <Side>
            <Handle />
            <WorkPanel>
              <TabRow $cols="24px 23px 23px 22px 22px 34px">
                {["Work", "Output", "Doc", "User", "Test", "Transform"].map((t) => <Tab key={t}>{t}</Tab>)}
              </TabRow>
              <LayerBox>
                <LayerTable>
                  <thead><tr><th>Layer</th><th>Mode</th><th>Output</th><th>Hide</th><th /></tr></thead>
                  <tbody><tr><td /><td>Laser Cut</td><td>Yes</td><td>No</td><td /></tr></tbody>
                </LayerTable>
              </LayerBox>
              <PropBox>
                <PropTable>
                  <tbody>
                    <tr><th>Color</th><td><ColorBar /></td></tr>
                    <tr><th>Speed(mm/s)</th><td>13.00</td></tr>
                    <tr><th>MinPower(%)-1</th><td>50.0</td></tr>
                    <tr><th>MaxPower(%)-1</th><td>60.0</td></tr>
                    <tr><th>Priority</th><td>1</td></tr>
                  </tbody>
                </PropTable>
              </PropBox>
              <TabRow $cols="27px 27px">
                <Tab>Laser 1</Tab><Tab>Laser 2</Tab>
              </TabRow>
              <Frame $mt={3}>
                <legend>Line/column setup</legend>
                <ArrayRow><span /><span>Num</span><span>space1</span><span>space2</span><span>Dislocation</span><span>Mirror</span></ArrayRow>
                {["X", "Y"].map((a) => (
                  <ArrayRow key={a}>
                    <span>{a}:</span>
                    <Num label={a + " count"} value="1" />
                    <Num label={a + " space 1"} value="0.000" />
                    <Num label={a + " space 2"} value="0.000" />
                    <Num label={a + " dislocation"} value="0.000" />
                    <MirrorPair>
                      <CheckLabel $dim $tight><input type="checkbox" />H</CheckLabel>
                      <CheckLabel $dim $tight><input type="checkbox" />V</CheckLabel>
                    </MirrorPair>
                  </ArrayRow>
                ))}
                <ArrayButtons>
                  <GridToggle aria-label="Array"><Icon name="gridBlue" size={12} /></GridToggle>
                  <Raised $h={14} $dim>Virtual mode</Raised>
                  <Raised $h={14} $dim>Bestrew...</Raised>
                  <Raised $h={14} $dim>Setting</Raised>
                  <Raised $h={14}>...</Raised>
                </ArrayButtons>
              </Frame>
            </WorkPanel>

            <LaserPanel>
              <Handle />
              <LaserInner>
                <Frame $pt={2}>
                  <legend>Laser work</legend>
                  <ButtonGrid>
                    <Raised>Start</Raised><Raised>Pause/Continue</Raised><Raised>Stop</Raised>
                    <Raised>SaveToUFile</Raised><Raised>UFileOutput</Raised><Raised>Download</Raised>
                  </ButtonGrid>
                  <LabelRow>
                    <label htmlFor="position">Position:</label>
                    <SelectBox $h={12}><select id="position"><option>Current position</option></select></SelectBox>
                  </LabelRow>
                  <OptionSplit>
                    <Stack $gap={1}>
                      <CheckLabel><input type="checkbox" defaultChecked />Path optimize</CheckLabel>
                      <CheckLabel><input type="checkbox" />Output select graphics</CheckLabel>
                      <CheckLabel $dim $indent={9}><input type="checkbox" disabled />Selected graphics position</CheckLabel>
                    </Stack>
                    <Stack $gap={1}>
                      <Raised>Cut scale</Raised>
                      <Raised>Go scale</Raised>
                    </Stack>
                  </OptionSplit>
                </Frame>
                <Frame $mt={2} $pt={2}>
                  <legend>Device</legend>
                  <DeviceRow>
                    <Raised>Setting</Raised>
                    <SelectBox $h={12}><select aria-label="Device"><option>Device---0.00\A.A.0</option></select></SelectBox>
                  </DeviceRow>
                </Frame>
              </LaserInner>
            </LaserPanel>
          </Side>
        </Main>

        <PaletteBar>
          <Swatches>
            {palette.map((c) => <Swatch key={c} $c={c} aria-label={"Layer color " + c} />)}
          </Swatches>
        </PaletteBar>
        <StatusBar>
          <span>*Welcome to use the Laser system of cutting,Propose the display area 1024*768 or higher *---</span>
          <span />
          <span>General mode,Total count:0</span>
          <span>21 object,Size:X77.733,Y12.594</span>
          <span>RDC6442G,X:466.773mm,Y:380.675mm</span>
        </StatusBar>

        <Brand>
          <svg width="104" height="104" viewBox="0 0 104 104" aria-hidden="true">
            <g fill="#b81f33">
              <path d="M1 28H41V97L31 90V54H14Q18 61 24 67V81Q3 62 1 28ZM12 37L14 45H31V37Z" fillRule="evenodd" />
              <path d="M62 28H102Q102 37 98 45H88L90 37H71V77Q82 67 84 54H95Q90 80 62 97Z" />
            </g>
            <path d="M0 19Q22 0 51 0T103 19V26H92Q77 13 56 11V100L51 104L47 100V11Q27 13 11 26H0Z" fill="#000" />
          </svg>
          <BrandName>ATC MACHINERY</BrandName>
          <BrandPhone>
            <svg width="12" height="12" viewBox="0 0 12 12" aria-hidden="true">
              <path d="M1 1h10v10H1z" fill="none" stroke="#b81f33" />
              <path d="M4 3q-1 1 0 3t3 3q2 0 2-1L7 7 6 7 5 5 5 4z" fill="#b81f33" />
            </svg>
            03 2929 6789
          </BrandPhone>
        </Brand>
      </Page>
    </>
  );
}
